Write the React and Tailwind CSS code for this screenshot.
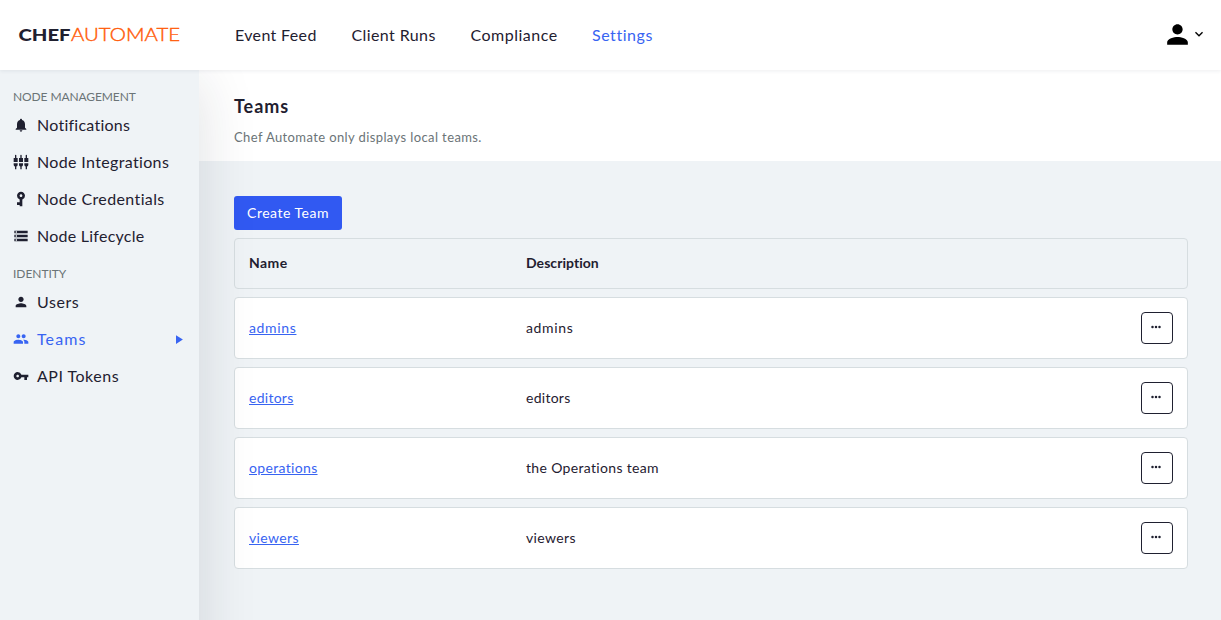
import {
  MdNotifications,
  MdSettingsInputComponent,
  MdVpnKey,
  MdStorage,
  MdPerson,
  MdPeople,
  MdPlayArrow,
  MdKeyboardArrowDown,
} from 'react-icons/md';

const navLinks = [
  { label: 'Event Feed', style: 'w-[81.5px] tracking-[0.35px]' },
  { label: 'Client Runs', style: 'w-[84px] tracking-[0.4px]' },
  { label: 'Compliance', style: 'w-[86.5px] tracking-[0.5px]' },
  { label: 'Settings', style: 'w-[61px] tracking-[0.55px] text-[#3864f2]' },
];

const sections = [
  {
    title: 'NODE MANAGEMENT',
    titleStyle: 'tracking-[-0.1px]',
    items: [
      { label: 'Notifications', icon: MdNotifications, style: 'tracking-[0.25px]' },
      { label: 'Node Integrations', icon: MdSettingsInputComponent, style: 'tracking-[0.35px]' },
      { label: 'Node Credentials', icon: MdVpnKey, iconStyle: 'rotate-90', style: 'tracking-[0.38px]' },
      { label: 'Node Lifecycle', icon: MdStorage, style: 'tracking-[0.25px]' },
    ],
  },
  {
    title: 'IDENTITY',
    titleStyle: 'tracking-[-0.05px]',
    items: [
      { label: 'Users', icon: MdPerson, style: 'tracking-[0.55px]' },
      { label: 'Teams', icon: MdPeople, active: true, style: 'tracking-[1.1px]' },
      { label: 'API Tokens', icon: MdVpnKey, style: 'tracking-[0.5px]' },
    ],
  },
];

const teams = [
  { name: 'admins', description: 'admins', style: 'tracking-[0.65px]' },
  { name: 'editors', description: 'editors', style: 'tracking-[0.27px]' },
  { name: 'operations', description: 'the Operations team', style: 'tracking-[0.33px]' },
  { name: 'viewers', description: 'viewers', style: 'tracking-[0.37px]' },
];

function Logo() {
  return (
    <svg width="162" height="20" viewBox="0 0 162 20" className="block" aria-label="Chef Automate">
      <text x="0.5" y="16" textLength="52" lengthAdjust="spacingAndGlyphs" className="fill-[#1f2030] text-[17px] font-black">CHEF</text>
      <text x="53" y="16" textLength="109" lengthAdjust="spacingAndGlyphs" className="fill-[#ff5c0a] stroke-[#ff5c0a] stroke-[0.4px] text-[17px] font-light">AUTOMATE</text>
    </svg>
  );
}

function Header() {
  return (
    <header className="relative z-20 flex h-[70px] items-center bg-white pl-[18px] pr-[14px] shadow-[0_1px_4px_rgba(31,40,60,0.08)]">
      <Logo />
      <nav className="ml-[55px] flex gap-[35px] text-base">
        {navLinks.map((link) => (
          <a key={link.label} className={`whitespace-nowrap ${link.style}`}>{link.label}</a>
        ))}
      </nav>
      <div className="ml-auto flex items-center pb-[2px] text-black">
        <MdPerson className="-mr-[2px] size-[31px]" />
        <MdKeyboardArrowDown className="size-4" />
      </div>
    </header>
  );
}

function Sidebar() {
  return (
    <aside className="relative z-10 flex h-[700px] w-[199px] shrink-0 flex-col gap-3 bg-[#eff3f6] pt-[19px] shadow-[0_10px_55px_rgba(31,34,53,0.14)]">
      {sections.map((section) => (
        <section key={section.title}>
          <h2 className={`h-[17px] pl-[13px] text-xs leading-4 text-[#6b7477] ${section.titleStyle}`}>{section.title}</h2>
          {section.items.map(({ label, icon: Icon, iconStyle, active, style }) => (
            <a key={label} className={`flex h-[37px] items-center pl-[13px] pr-[13px] ${style} ${active ? 'text-[#3864f2]' : ''}`}>
              <Icon className={`mr-2 size-4 ${iconStyle || ''}`} />
              <span>{label}</span>
              {active && <MdPlayArrow className="ml-auto mt-[2px] size-[15px]" />}
            </a>
          ))}
        </section>
      ))}
    </aside>
  );
}

function TeamsTable() {
  return (
    <div className="mt-2 flex flex-col gap-2 text-sm">
      <div className="flex h-[51px] items-center rounded border border-[#d6dde0] px-[14px] pb-[2px] font-bold">
        <span className="w-[277px] tracking-[0.4px]">Name</span>
        <span className="tracking-[0.05px]">Description</span>
      </div>
      {teams.map(({ name, description, style }) => (
        <div key={name} className={`flex h-[62px] items-center rounded border border-[#d6dde0] bg-white px-[14px] ${style}`}>
          <div className="w-[277px]">
            <a className="text-[#3864f2] underline">{name}</a>
          </div>
          <span>{description}</span>
          <button className="ml-auto flex size-8 items-center justify-center rounded border border-[#1f2030] pb-[3px] pr-[2px]" aria-label="Options">
            <svg width="10" height="4" viewBox="0 0 10 4" className="fill-[#1f2030]">
              <circle cx="1.5" cy="2" r="1.25" />
              <circle cx="5" cy="2" r="1.25" />
              <circle cx="8.5" cy="2" r="1.25" />
            </svg>
          </button>
        </div>
      ))}
    </div>
  );
}

export default function App() {
  return (
    <div className="h-[620px] overflow-hidden bg-[#eff3f6] font-['Lato',sans-serif] text-[#1f2030]">
      <Header />
      <div className="flex">
        <Sidebar />
        <main className="min-w-0 flex-1">
          <div className="h-[91px] bg-white pl-[35px] pt-[24px]">
            <h1 className="text-lg leading-6 font-bold tracking-[0.95px]">Teams</h1>
            <p className="mt-[9px] text-[13px] leading-5 tracking-[0.39px] text-[#6b7477]">Chef Automate only displays local teams.</p>
          </div>
          <div className="pl-[35px] pr-[33px] pt-[35px]">
            <button className="flex h-[34px] w-[108px] items-center justify-center rounded-[3px] bg-[#3159f2] text-sm tracking-[0.5px] text-white">Create Team</button>
            <TeamsTable />
          </div>
        </main>
      </div>
    </div>
  );
}
